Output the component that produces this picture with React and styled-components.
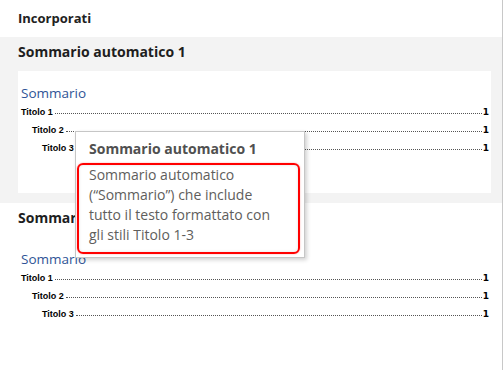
import React from "react"
import styled, { createGlobalStyle } from "styled-components"

const GlobalStyle = createGlobalStyle`
  html, body {
    margin: 0;
    padding: 0;
    background: #ffffff;
  }
  body {
    font-family: "Open Sans", "Noto Sans", sans-serif;
    color: #222;
  }
`

const entries = [
  { label: "Titolo 1", indent: 0 },
  { label: "Titolo 2", indent: 11 },
  { label: "Titolo 3", indent: 21 },
]

const descriptionLines = [
  "Sommario automatico",
  "(“Sommario”) che include",
  "tutto il testo formattato con",
  "gli stili Titolo 1-3",
]

const TocPreview = () => (
  <Preview>
    <PreviewHeading>Sommario</PreviewHeading>
    {entries.map((e) => (
      <TocRow key={e.label} $indent={e.indent}>
        <TocLabel>{e.label}</TocLabel>
        <Leader />
        <PageNum>1</PageNum>
      </TocRow>
    ))}
  </Preview>
)

const GalleryItem = ({ title, selected }) => (
  <Item $selected={selected}>
    <ItemTitle>{title}</ItemTitle>
    <TocPreview />
  </Item>
)

export default function App() {
  return (
    <>
      <GlobalStyle />
      <Page>
        <GroupHeader>Incorporati</GroupHeader>
        <GalleryItem title="Sommario automatico 1" selected />
        <GalleryItem title="Sommario automatico 2" />

        <Tooltip>
          <TooltipTitle>Sommario automatico 1</TooltipTitle>
          <TooltipBody>
            {descriptionLines.map((line) => (
              <BodyLine key={line}>{line}</BodyLine>
            ))}
          </TooltipBody>
        </Tooltip>
      </Page>
    </>
  )
}

// Styling
const Page = styled.div`
  position: relative;
  width: 503px;
  height: 370px;
  box-sizing: border-box;
  border-right: 1px solid #c8c8c8;
  overflow: hidden;
`

const GroupHeader = styled.div`
  height: 37px;
  box-sizing: border-box;
  padding: 8px 0 0 18px;
  font-size: 13px;
  font-weight: 700;
  line-height: 20px;
  color: #222;
`

const Item = styled.div`
  background: ${(p) => (p.$selected ? "#f3f3f3" : "transparent")};
  padding: 0 11px 10px 18px;
`

const ItemTitle = styled.div`
  height: 34px;
  box-sizing: border-box;
  padding-top: 5px;
  font-size: 14px;
  font-weight: 700;
  line-height: 20px;
  color: #1e1e1e;
  white-space: nowrap;
`

const Preview = styled.div`
  background: #ffffff;
  height: 122px;
  box-sizing: border-box;
  padding: 12px 2px 0 3px;
`

const PreviewHeading = styled.div`
  font-size: 13.5px;
  line-height: 20px;
  color: #2f5496;
`

const TocRow = styled.div`
  display: flex;
  align-items: baseline;
  height: 18px;
  line-height: 18px;
  padding-left: ${(p) => p.$indent}px;
  font-family: "Liberation Sans", Arial, sans-serif;
  font-size: 9px;
  font-weight: 700;
  color: #000;
`

const TocLabel = styled.span`
  white-space: nowrap;
  padding-right: 2px;
`

const Leader = styled.span`
  flex: 1;
  border-bottom: 1px dotted #555;
  transform: translateY(-1px);
`

const PageNum = styled.span`
  font-family: "DejaVu Sans", sans-serif;
  padding-left: 1px;
`

const Tooltip = styled.div`
  position: absolute;
  left: 75px;
  top: 131px;
  width: 230px;
  height: 127px;
  box-sizing: border-box;
  background: #ffffff;
  border: 1px solid #c6c6c6;
  box-shadow: 2px 2px 4px rgba(0, 0, 0, 0.18);
`

const TooltipTitle = styled.div`
  height: 31px;
  box-sizing: border-box;
  padding: 7px 0 0 13px;
  font-size: 14px;
  font-weight: 700;
  line-height: 20px;
  color: #505050;
  white-space: nowrap;
`

const TooltipBody = styled.div`
  margin-left: 1px;
  width: 223px;
  height: 91px;
  box-sizing: border-box;
  border: 2px solid #ff0000;
  border-radius: 6px;
  box-shadow: inset 0 0 3px rgba(0, 0, 0, 0.12), 0 0 2px rgba(255, 0, 0, 0.35);
  padding: 0 6px 0 10px;
  font-size: 14px;
  line-height: 20px;
  color: #605e5c;
`

const BodyLine = styled.div`
  white-space: nowrap;
`
